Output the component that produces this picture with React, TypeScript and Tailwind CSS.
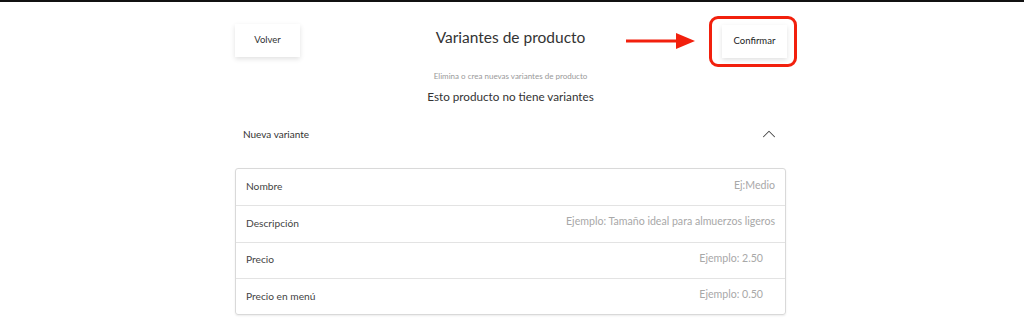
import {ChevronUp} from "lucide-react";

const rows = [
    {label: "Nombre", placeholder: "Ej:Medio", pad: "pr-[10px]"},
    {label: "Descripción", placeholder: "Ejemplo: Tamaño ideal para almuerzos ligeros", pad: "pr-[10px]"},
    {label: "Precio", placeholder: "Ejemplo: 2.50", pad: "pr-[22px]"},
    {label: "Precio en menú", placeholder: "Ejemplo: 0.50", pad: "pr-[22px]"},
];

const Arrow = () => (
    <svg width="70" height="18" viewBox="0 0 70 18" className="block">
        <rect x="0" y="7.5" width="54" height="3" fill="#f2200d"/>
        <polygon points="50,1 69,9 50,17" fill="#f2200d"/>
    </svg>
);

export default function App() {
    return (
        <div className="w-[1024px] h-[332px] bg-white overflow-hidden text-[#333]"
             style={{fontFamily: 'Lato, "Liberation Sans", sans-serif'}}>
            <div className="h-[2px] bg-[#111]"/>
            <div className="w-[551px] ml-[235px]">
                {/* header */}
                <div className="grid grid-cols-[1fr_auto_1fr] items-start pt-[14px]">
                    <div>
                        <button className="w-[65px] h-[33px] mt-[8px] bg-white text-[9.5px] text-[#333] shadow-[0_2px_5px_rgba(0,0,0,0.12)]">
                            Volver
                        </button>
                    </div>
                    <h1 className="mt-[9px] text-[15.5px] leading-[24px] text-[#333]">Variantes de producto</h1>
                    <div className="flex items-start justify-end">
                        <div className="mt-[16px] mr-[13px]"><Arrow/></div>
                        <div className="-mr-[11px] pt-[6px] pb-[6px] pl-[10px] pr-[7px] border-[3px] border-[#f2200d] rounded-[9px]">
                            <button className="block w-[65px] h-[33px] bg-white text-[9.5px] text-[#222] shadow-[0_2px_5px_rgba(0,0,0,0.12)]">
                                Confirmar
                            </button>
                        </div>
                    </div>
                </div>

                <p className="mt-[4px] text-center text-[8px] leading-[10px] text-[#999]">Elimina o crea nuevas variantes de producto</p>
                <p className="mt-[7px] text-center text-[11.7px] leading-[16px] text-[#333]">Esto producto no tiene variantes</p>

                {/* accordion header */}
                <div className="flex items-center justify-between mt-[20px] h-[20px] pl-[8px] pr-[6px]">
                    <span className="text-[10px] text-[#333]">Nueva variante</span>
                    <ChevronUp size={22} strokeWidth={1.1} className="text-[#444]"/>
                </div>

                {/* form */}
                <div className="mt-[24px] border border-[#d9d9d9] rounded-[3px] shadow-[0_1px_2px_rgba(0,0,0,0.08)]">
                    {rows.map((r, i) => (
                        <div key={r.label}
                             className={`flex items-center justify-between h-[36.25px] pl-[10px] ${r.pad} ${i > 0 ? "border-t border-[#e3e3e3]" : ""}`}>
                            <span className="text-[10.2px] text-[#444]">{r.label}</span>
                            <span className="text-[10.6px] text-[#a8a8a8] -mt-[3px]">{r.placeholder}</span>
                        </div>
                    ))}
                </div>
            </div>
        </div>
    );
}
